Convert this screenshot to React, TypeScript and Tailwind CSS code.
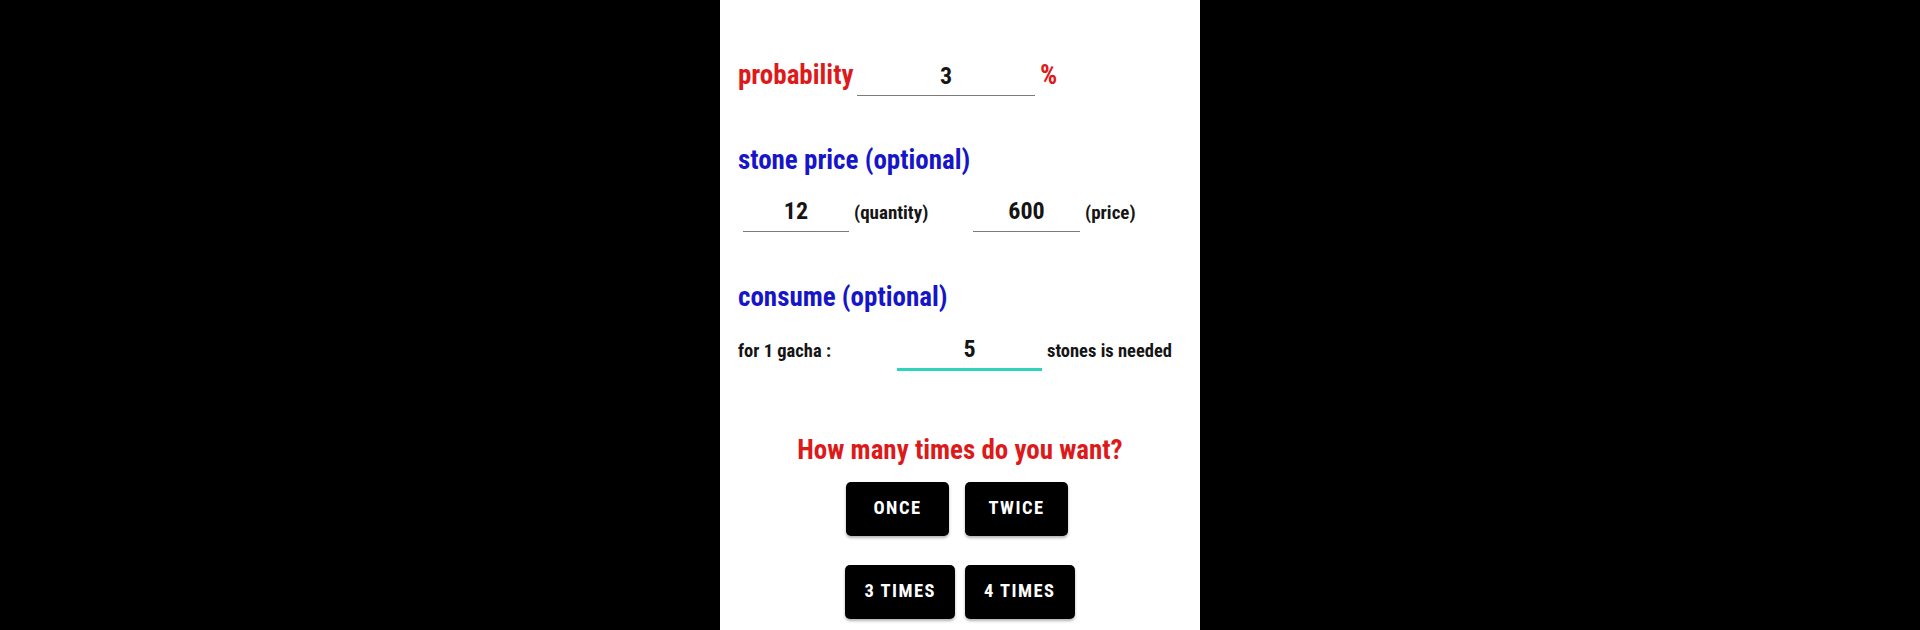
import React from 'react'

// 入力欄っぽい下線付きの数値表示
function Field({
  value,
  className,
  line = 'border-b-[1.5px] border-[#7a7a7a]',
}: {
  value: string
  className: string
  line?: string
}) {
  return (
    <div
      className={`text-center text-[24px] leading-[28px] font-bold text-[#151515] ${line} ${className}`}
    >
      {value}
    </div>
  )
}

function Btn({ label }: { label: string }) {
  return (
    <button
      type="button"
      className="h-[54px] min-w-[103px] rounded-[5px] bg-black px-[19px] text-[18.5px] font-bold uppercase tracking-[0.08em] text-white shadow-[0_2px_3px_rgba(0,0,0,0.3)]"
    >
      {label}
    </button>
  )
}

export default function App() {
  return (
    <div className="flex h-[630px] w-full justify-center bg-black">
      <div className="h-full w-[480px] overflow-hidden bg-white pl-[18px] font-['Roboto_Condensed','Liberation_Sans_Narrow','DejaVu_Sans_Condensed',Roboto,sans-serif]">
        {/* probability */}
        <div className="mt-[58px] flex items-baseline">
          <div className="w-[119px] text-[27px] leading-[34px] font-bold text-[#dd1a1a]">
            probability
          </div>
          <Field value="3" className="w-[178px] pb-[5px]" />
          <div className="ml-[5px] text-[27px] leading-[34px] font-bold text-[#dd1a1a]">
            %
          </div>
        </div>

        {/* stone price */}
        <div className="mt-[47px] text-[27px] leading-[34px] font-bold text-[#1616c8]">
          stone price (optional)
        </div>
        <div className="mt-[20px] flex items-baseline">
          <Field value="12" className="ml-[5px] w-[106px] pb-[6px]" />
          <div className="ml-[5px] w-[119px] text-[19px] leading-[24px] font-bold text-[#151515]">
            (quantity)
          </div>
          <Field value="600" className="w-[107px] pb-[6px]" />
          <div className="ml-[5px] text-[19px] leading-[24px] font-bold text-[#151515]">
            (price)
          </div>
        </div>

        {/* consume */}
        <div className="mt-[48px] text-[27px] leading-[34px] font-bold text-[#1616c8]">
          consume (optional)
        </div>
        <div className="mt-[21px] flex items-baseline">
          <div className="w-[159px] text-[18.5px] leading-[24px] font-bold text-[#151515]">
            for 1 gacha :
          </div>
          <Field
            value="5"
            className="w-[145px] pb-[5px]"
            line="border-b-[3px] border-[#2fd3b9]"
          />
          <div className="ml-[5px] text-[18.5px] leading-[24px] font-bold text-[#151515]">
            stones is needed
          </div>
        </div>

        {/* times */}
        <div className="-ml-[18px] mt-[63px] text-center text-[27px] leading-[32px] font-bold text-[#dd1a1a]">
          How many times do you want?
        </div>
        <div className="-ml-[18px] mt-[16px] flex justify-center gap-[16px] pr-[6px]">
          <Btn label="Once" />
          <Btn label="Twice" />
        </div>
        <div className="-ml-[18px] mt-[29px] flex justify-center gap-[10px]">
          <Btn label="3 Times" />
          <Btn label="4 Times" />
        </div>
      </div>
    </div>
  )
}
